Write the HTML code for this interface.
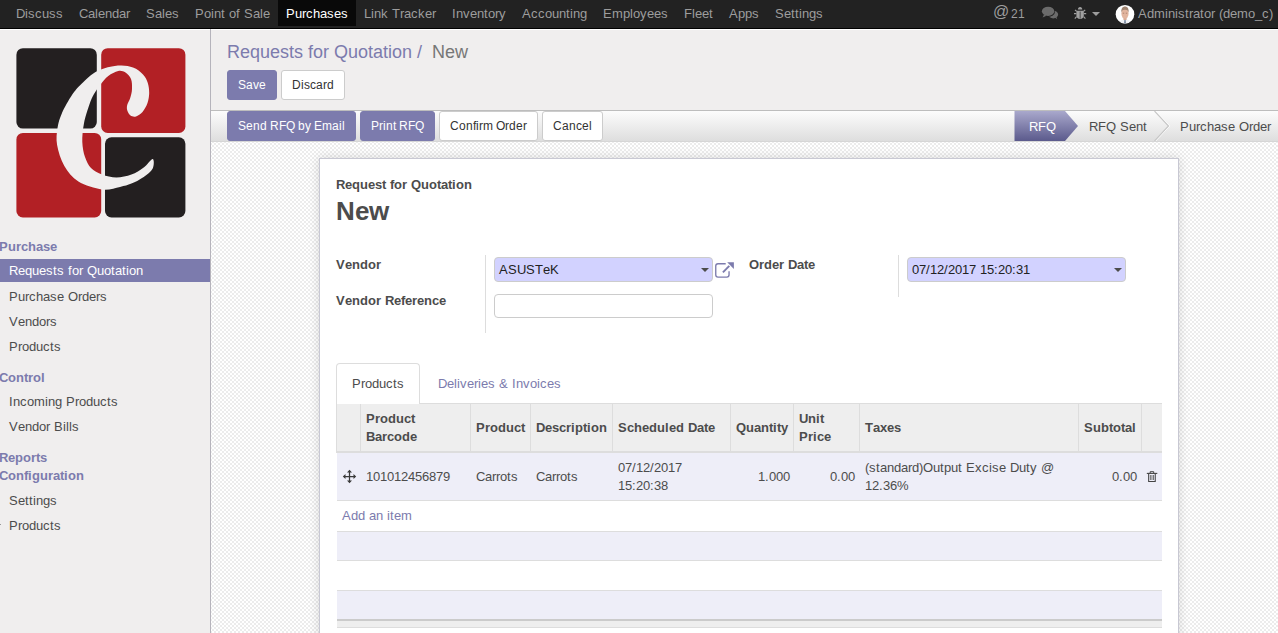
<!DOCTYPE html>
<html><head><meta charset="utf-8">
<style>
*{box-sizing:border-box}
html,body{margin:0;padding:0}
body{width:1278px;height:633px;overflow:hidden;position:relative;font-family:"Liberation Sans",sans-serif;font-size:13px;color:#4c4c4c;background:#f0eeee;font-kerning:none}
.a{position:absolute;white-space:nowrap;line-height:20px}
.bg{position:absolute}
.g i{display:inline-block;font-style:normal;white-space:pre;overflow:visible}
.btn{position:absolute;border:1px solid #ccc;border-radius:3px;background:#fff}
.btnp{background:#7c7bad;border-color:#7c7bad}
.inp{position:absolute;height:25px;border:1px solid #ccc;border-radius:4px;background:#fff}
.req{background:#d2d2ff}
.caret{position:absolute;width:0;height:0;border-left:4px solid transparent;border-right:4px solid transparent;border-top:4px solid #4c4c4c}
.vl{position:absolute;width:1px;background:#ddd}
.hl{position:absolute;height:1px;background:#ddd}
</style></head>
<body>
<!-- navbar -->
<div class="bg" style="left:0;top:0;width:1278px;height:28px;background:#222"></div>
<div class="bg" style="left:0;top:28px;width:1278px;height:1px;background:#000"></div>
<div class="bg" style="left:0;top:29px;width:1278px;height:1px;background:#fff"></div>
<div class="bg" style="left:278px;top:0;width:78px;height:26px;background:#090909"></div>
<div class="a" style="left:993px;top:0px;font-size:16px;line-height:24px;color:#9d9d9d">@</div>
<div class="bg" style="left:0;top:524px;width:1px;height:1px;background:#999"></div>
<svg class="bg" style="left:1041px;top:6px" width="18" height="14" viewBox="0 0 18 14">
 <ellipse cx="12.3" cy="8.6" rx="4.8" ry="3.9" fill="#6b6b6b"/>
 <path d="M13.8,11.5 L16.2,13.2 L15.2,10.6Z" fill="#6b6b6b"/>
 <ellipse cx="7.1" cy="5.4" rx="6.9" ry="5.3" fill="#222"/>
 <ellipse cx="7.1" cy="5.3" rx="6.2" ry="4.6" fill="#6b6b6b"/>
 <path d="M3,8.6 L1.6,11.4 L5.6,9.7Z" fill="#6b6b6b"/>
</svg>
<svg class="bg" style="left:1073px;top:6px" width="14" height="14" viewBox="0 0 14 14">
 <path d="M4.9,3.5 C4.9,2 5.8,1.1 7.1,1.1 C8.4,1.1 9.3,2 9.3,3.5Z" fill="#a0a0a0"/>
 <path d="M3.4,4.8 L10.8,4.8 L10.8,9.5 C10.8,11.6 9.3,12.9 7.1,12.9 C4.9,12.9 3.4,11.6 3.4,9.5Z" fill="#a0a0a0"/>
 <rect x="6.7" y="5.6" width="0.9" height="7" fill="#444"/>
 <path d="M3.6,5.4 L2,3.8 M3.4,7.6 L1,7.6 M3.6,10.6 L1.8,12.6 M10.6,5.4 L12.2,3.8 M10.8,7.6 L13.2,7.6 M10.6,10.6 L12.4,12.6" stroke="#a0a0a0" stroke-width="1.1"/>
</svg>
<div class="caret" style="left:1092px;top:12px;border-top-color:#9d9d9d"></div>
<svg class="bg" style="left:1115px;top:4px" width="20" height="20" viewBox="0 0 20 20">
 <defs><clipPath id="avc"><circle cx="10" cy="10.2" r="9.3"/></clipPath></defs>
 <circle cx="10" cy="10.2" r="9.3" fill="#fff"/>
 <g clip-path="url(#avc)">
 <path d="M3.5,21 C4,16.8 6.5,15.6 10,15.6 C13.5,15.6 16,16.8 16.5,21Z" fill="#eef0f4"/>
 <path d="M8.3,13.5 L11.7,13.5 L11.5,16 L8.5,16Z" fill="#d8aa94"/>
 <ellipse cx="10" cy="9.6" rx="3.6" ry="5" fill="#e2b59e"/>
 <path d="M6.3,8.6 C6,4.6 7.6,2.6 10,2.6 C12.4,2.6 14,4.6 13.7,8.6 C13.3,6.6 12.3,5.6 10,5.7 C7.7,5.6 6.7,6.6 6.3,8.6Z" fill="#a08470"/>
 <path d="M7.8,9.2 L9.2,9.2 M10.8,9.2 L12.2,9.2" stroke="#9a6e5c" stroke-width="0.7"/>
 <path d="M9.4,16 L10.6,16 L11,20 L9,20Z" fill="#6f7f96"/>
 </g>
</svg>

<!-- sidebar -->
<div class="bg" style="left:210px;top:29px;width:1px;height:604px;background:#b5b3bb"></div>
<svg class="bg" style="left:0;top:0" width="210" height="230" viewBox="0 0 210 230">
 <rect x="16.4" y="48.2" width="80.4" height="80.4" rx="6.5" fill="#231f20"/>
 <rect x="101.2" y="48.2" width="84.2" height="84.7" rx="6.5" fill="#b22025"/>
 <rect x="16.4" y="132.9" width="84.8" height="84.5" rx="6.5" fill="#b22025"/>
 <rect x="105" y="137.3" width="80.4" height="80.1" rx="6.5" fill="#231f20"/>
 <path d="M152.7,168.4 C151.2,171.4 147.2,174.4 143.7,176.9 C140.1,179.4 135.3,181.9 131.4,183.6 C127.5,185.3 124.9,185.9 120.0,186.9 C115.1,187.9 109.0,190.4 102.1,189.5 C95.2,188.6 84.7,185.5 78.4,181.6 C72.1,177.7 67.8,171.9 64.2,165.8 C60.7,159.7 58.2,151.3 57.1,145.0 C56.0,138.7 56.7,133.3 57.5,128.0 C58.3,122.7 59.6,118.5 62.0,113.0 C64.4,107.5 68.7,99.9 72.0,95.0 C75.3,90.1 77.4,87.7 81.6,83.7 C85.8,79.7 91.3,74.0 97.4,71.0 C103.5,68.0 112.1,66.2 118.0,65.6 C123.9,65.0 128.8,66.0 133.0,67.5 C137.2,69.0 140.5,71.9 143.0,74.5 C145.5,77.1 146.8,79.9 147.8,83.0 C148.8,86.1 149.2,89.7 149.2,93.0 C149.1,96.3 148.6,99.8 147.5,103.0 C146.4,106.2 144.4,109.8 142.5,112.0 C140.6,114.2 138.0,115.8 136.0,116.4 C134.0,117.0 131.9,116.5 130.5,115.5 C129.1,114.5 127.8,112.2 127.3,110.5 C126.8,108.8 126.7,107.1 127.2,105.0 C127.7,102.9 129.4,100.7 130.2,98.0 C131.0,95.3 131.9,92.2 132.0,89.0 C132.1,85.8 132.1,81.8 131.0,79.0 C129.9,76.2 127.6,73.8 125.5,72.5 C123.4,71.2 121.1,70.4 118.2,71.0 C115.3,71.6 111.2,73.8 108.3,76.0 C105.3,78.2 102.9,81.5 100.5,84.5 C98.1,87.5 95.8,90.7 94.0,94.0 C92.2,97.3 91.2,99.3 89.5,104.2 C87.8,109.1 85.2,116.9 84.0,123.2 C82.8,129.5 82.1,136.4 82.3,142.0 C82.5,147.6 83.5,152.7 85.0,157.0 C86.5,161.3 88.2,165.1 91.0,168.0 C93.8,170.9 97.9,172.9 102.1,174.5 C106.3,176.1 111.5,177.5 116.4,177.5 C121.3,177.5 126.9,176.3 131.4,174.6 C135.9,172.9 140.1,170.1 143.7,167.5 C147.2,164.9 151.2,158.8 152.7,158.9 C154.2,159.1 154.2,165.4 152.7,168.4Z" fill="#f0eeee"/>
</svg>
<div class="bg" style="left:0;top:259px;width:210px;height:23px;background:#7c7bad"></div>

<!-- statusbar -->
<div class="bg" style="left:211px;top:110px;width:1067px;height:1px;background:#bdbdbd"></div>
<div class="bg" style="left:211px;top:111px;width:1067px;height:30px;background:linear-gradient(#fcfcfc,#dedede)"></div>
<div class="bg" style="left:211px;top:141px;width:1067px;height:1px;background:#d6d6d6"></div>
<svg class="bg" style="left:1000px;top:111px" width="278" height="30" viewBox="0 0 278 30">
 <defs><linearGradient id="pg" x1="0" y1="0" x2="0" y2="1"><stop offset="0" stop-color="#a9a8cc"/><stop offset="1" stop-color="#5b5a8c"/></linearGradient></defs>
 <path d="M14.5,0 L65,0 L78,15 L65,30 L14.5,30Z" fill="url(#pg)"/>
 <path d="M155.7,0 L169.7,15 L155.7,30" fill="none" stroke="#ffffff" stroke-width="1"/>
 <path d="M154.5,0 L168.5,15 L154.5,30" fill="none" stroke="#c6c6c6" stroke-width="1.1"/>
</svg>

<div class="btn btnp" style="left:227px;top:70px;width:50px;height:30px"></div>
<div class="btn" style="left:281px;top:70px;width:64px;height:30px"></div>
<div class="btn btnp" style="left:227px;top:111px;width:129px;height:30px"></div>
<div class="btn btnp" style="left:360.0px;top:111px;width:75px;height:30px"></div>
<div class="btn" style="left:439.0px;top:111px;width:99px;height:30px"></div>
<div class="btn" style="left:542.0px;top:111px;width:61px;height:30px"></div>

<!-- form bg -->
<svg class="bg" style="left:211px;top:142px" width="1067" height="491">
 <defs><pattern id="chk" x="3" y="1" width="4" height="4" patternUnits="userSpaceOnUse"><rect width="4" height="4" fill="#fff"/><rect x="0" y="0" width="2" height="2" fill="#ececec"/><rect x="2" y="2" width="2" height="2" fill="#ececec"/></pattern></defs>
 <rect width="1067" height="491" fill="url(#chk)"/>
</svg>
<div class="bg" style="left:319px;top:158px;width:860px;height:520px;background:#fff;border:1px solid #c8c8d3;box-shadow:0 0 10px rgba(0,0,0,.15)"></div>

<!-- fields -->
<div class="bg" style="left:485px;top:255px;width:1px;height:78px;background:#ddd"></div>
<div class="bg" style="left:898px;top:255px;width:1px;height:42px;background:#ddd"></div>
<div class="inp req" style="left:494px;top:257px;width:219px"></div>
<div class="caret" style="left:701px;top:268px"></div>
<svg class="bg" style="left:714px;top:261px" width="22" height="18" viewBox="0 0 22 18">
 <path d="M11.7,2.75 L4,2.75 C2.6,2.75 1.75,3.6 1.75,5 L1.75,13.8 C1.75,15.2 2.6,16.05 4,16.05 L12.8,16.05 C14.2,16.05 15.05,15.2 15.05,13.8 L15.05,10.3" fill="none" stroke="#7c7bad" stroke-width="1.35"/>
 <path d="M8.9,11.3 L15.3,4.9" stroke="#7c7bad" stroke-width="1.9"/>
 <path d="M13.2,1.2 L19.9,1.2 L19.9,7.9Z" fill="#7c7bad"/>
</svg>
<div class="inp" style="left:494px;top:294px;width:219px;height:24px"></div>
<div class="inp req" style="left:907px;top:257px;width:219px"></div>
<div class="caret" style="left:1114px;top:268px"></div>

<!-- tabs -->
<div class="bg" style="left:336px;top:403px;width:826px;height:1px;background:#ddd"></div>
<div class="bg" style="left:336px;top:363px;width:84px;height:41px;background:#fff;border:1px solid #ddd;border-bottom:none;border-radius:4px 4px 0 0"></div>

<!-- table -->
<div class="bg" style="left:336px;top:404px;width:826px;height:47px;background:#eee"></div>
<div class="bg" style="left:336px;top:404px;width:1px;height:47px;background:#ddd"></div>
<div class="bg" style="left:336px;top:451px;width:826px;height:2px;background:#ddd"></div>
<div class="vl" style="left:360px;top:404px;height:47px"></div>
<div class="vl" style="left:470px;top:404px;height:47px"></div>
<div class="vl" style="left:530px;top:404px;height:47px"></div>
<div class="vl" style="left:612px;top:404px;height:47px"></div>
<div class="vl" style="left:730px;top:404px;height:47px"></div>
<div class="vl" style="left:793px;top:404px;height:47px"></div>
<div class="vl" style="left:859px;top:404px;height:47px"></div>
<div class="vl" style="left:1078px;top:404px;height:47px"></div>
<div class="vl" style="left:1141px;top:404px;height:47px"></div>
<div class="bg" style="left:337px;top:453px;width:825px;height:47px;background:#eeeef8"></div>
<div class="hl" style="left:337px;top:500px;width:825px"></div>
<div class="hl" style="left:337px;top:531px;width:825px"></div>
<div class="bg" style="left:337px;top:532px;width:825px;height:28px;background:#eeeef8"></div>
<div class="hl" style="left:337px;top:560px;width:825px"></div>
<div class="hl" style="left:337px;top:590px;width:825px"></div>
<div class="bg" style="left:337px;top:591px;width:825px;height:28px;background:#eeeef8"></div>
<div class="bg" style="left:337px;top:619px;width:825px;height:2px;background:#cbcbcb"></div>
<div class="bg" style="left:337px;top:621px;width:825px;height:6px;background:#eee"></div>
<div class="hl" style="left:337px;top:627px;width:825px"></div>
<!-- move icon -->
<svg class="bg" style="left:342px;top:469px" width="15" height="15" viewBox="0 0 15 15">
 <path d="M2,7.5 L13,7.5 M7.5,2 L7.5,13" stroke="#3a3a3a" stroke-width="1.25"/>
 <path d="M7.5,0.8 L10,3.5 L5,3.5Z M7.5,14.2 L10,11.5 L5,11.5Z M0.8,7.5 L3.5,5 L3.5,10Z M14.2,7.5 L11.5,5 L11.5,10Z" fill="#3a3a3a"/>
</svg>
<!-- trash icon -->
<svg class="bg" style="left:1146px;top:470px" width="12" height="13" viewBox="0 0 12 13">
 <path d="M0.8,3.4 L11.3,3.4" stroke="#444" stroke-width="1.1"/>
 <path d="M4.2,3.2 L4.2,1.7 L7.7,1.7 L7.7,3.2" fill="none" stroke="#444" stroke-width="1"/>
 <path d="M2.65,3.4 L2.65,11.45 L9.25,11.45 L9.25,3.4" fill="none" stroke="#444" stroke-width="1.05"/>
 <path d="M4.4,5 L4.4,10 M5.95,5 L5.95,10 M7.5,5 L7.5,10" stroke="#555" stroke-width="0.8"/>
</svg>

<div class="a g" style="top:4px;font-size:13px;left:16px;color:#9d9d9d;"><i style="width:9px">D</i><i style="width:3px">i</i><i style="width:7px">s</i><i style="width:7px">c</i><i style="width:7px">u</i><i style="width:7px">s</i><i style="width:7px">s</i></div>
<div class="a g" style="top:4px;font-size:13px;left:79px;color:#9d9d9d;"><i style="width:9px">C</i><i style="width:7px">a</i><i style="width:3px">l</i><i style="width:7px">e</i><i style="width:7px">n</i><i style="width:7px">d</i><i style="width:7px">a</i><i style="width:4px">r</i></div>
<div class="a g" style="top:4px;font-size:13px;left:146px;color:#9d9d9d;"><i style="width:9px">S</i><i style="width:7px">a</i><i style="width:3px">l</i><i style="width:7px">e</i><i style="width:7px">s</i></div>
<div class="a g" style="top:4px;font-size:13px;left:195px;color:#9d9d9d;"><i style="width:9px">P</i><i style="width:7px">o</i><i style="width:3px">i</i><i style="width:7px">n</i><i style="width:4px">t</i><i style="width:4px"> </i><i style="width:7px">o</i><i style="width:4px">f</i><i style="width:4px"> </i><i style="width:9px">S</i><i style="width:7px">a</i><i style="width:3px">l</i><i style="width:7px">e</i></div>
<div class="a g" style="top:4px;font-size:13px;left:286px;color:#fff;"><i style="width:9px">P</i><i style="width:7px">u</i><i style="width:4px">r</i><i style="width:7px">c</i><i style="width:7px">h</i><i style="width:7px">a</i><i style="width:7px">s</i><i style="width:7px">e</i><i style="width:7px">s</i></div>
<div class="a g" style="top:4px;font-size:13px;left:364px;color:#9d9d9d;"><i style="width:7px">L</i><i style="width:3px">i</i><i style="width:7px">n</i><i style="width:7px">k</i><i style="width:4px"> </i><i style="width:8px">T</i><i style="width:4px">r</i><i style="width:7px">a</i><i style="width:7px">c</i><i style="width:7px">k</i><i style="width:7px">e</i><i style="width:4px">r</i></div>
<div class="a g" style="top:4px;font-size:13px;left:452px;color:#9d9d9d;"><i style="width:4px">I</i><i style="width:7px">n</i><i style="width:7px">v</i><i style="width:7px">e</i><i style="width:7px">n</i><i style="width:4px">t</i><i style="width:7px">o</i><i style="width:4px">r</i><i style="width:7px">y</i></div>
<div class="a g" style="top:4px;font-size:13px;left:522px;color:#9d9d9d;"><i style="width:9px">A</i><i style="width:7px">c</i><i style="width:7px">c</i><i style="width:7px">o</i><i style="width:7px">u</i><i style="width:7px">n</i><i style="width:4px">t</i><i style="width:3px">i</i><i style="width:7px">n</i><i style="width:7px">g</i></div>
<div class="a g" style="top:4px;font-size:13px;left:603px;color:#9d9d9d;"><i style="width:9px">E</i><i style="width:11px">m</i><i style="width:7px">p</i><i style="width:3px">l</i><i style="width:7px">o</i><i style="width:7px">y</i><i style="width:7px">e</i><i style="width:7px">e</i><i style="width:7px">s</i></div>
<div class="a g" style="top:4px;font-size:13px;left:684px;color:#9d9d9d;"><i style="width:8px">F</i><i style="width:3px">l</i><i style="width:7px">e</i><i style="width:7px">e</i><i style="width:4px">t</i></div>
<div class="a g" style="top:4px;font-size:13px;left:729px;color:#9d9d9d;"><i style="width:9px">A</i><i style="width:7px">p</i><i style="width:7px">p</i><i style="width:7px">s</i></div>
<div class="a g" style="top:4px;font-size:13px;left:775px;color:#9d9d9d;"><i style="width:9px">S</i><i style="width:7px">e</i><i style="width:4px">t</i><i style="width:4px">t</i><i style="width:3px">i</i><i style="width:7px">n</i><i style="width:7px">g</i><i style="width:7px">s</i></div>
<div class="a g" style="top:4px;font-size:12px;left:1011px;color:#9d9d9d;"><i style="width:7px">2</i><i style="width:7px">1</i></div>
<div class="a g" style="top:4px;font-size:13px;left:1138px;color:#9d9d9d;"><i style="width:9px">A</i><i style="width:7px">d</i><i style="width:11px">m</i><i style="width:3px">i</i><i style="width:7px">n</i><i style="width:3px">i</i><i style="width:7px">s</i><i style="width:4px">t</i><i style="width:4px">r</i><i style="width:7px">a</i><i style="width:4px">t</i><i style="width:7px">o</i><i style="width:4px">r</i><i style="width:4px"> </i><i style="width:4px">(</i><i style="width:7px">d</i><i style="width:7px">e</i><i style="width:11px">m</i><i style="width:7px">o</i><i style="width:7px">_</i><i style="width:7px">c</i><i style="width:4px">)</i></div>
<div class="a g" style="top:237px;font-size:13px;left:-1px;font-weight:bold;color:#7c7bad;"><i style="width:9px">P</i><i style="width:8px">u</i><i style="width:5px">r</i><i style="width:7px">c</i><i style="width:8px">h</i><i style="width:7px">a</i><i style="width:7px">s</i><i style="width:7px">e</i></div>
<div class="a g" style="top:261px;font-size:13px;left:9px;color:#fff;"><i style="width:9px">R</i><i style="width:7px">e</i><i style="width:7px">q</i><i style="width:7px">u</i><i style="width:7px">e</i><i style="width:7px">s</i><i style="width:4px">t</i><i style="width:7px">s</i><i style="width:4px"> </i><i style="width:4px">f</i><i style="width:7px">o</i><i style="width:4px">r</i><i style="width:4px"> </i><i style="width:10px">Q</i><i style="width:7px">u</i><i style="width:7px">o</i><i style="width:4px">t</i><i style="width:7px">a</i><i style="width:4px">t</i><i style="width:3px">i</i><i style="width:7px">o</i><i style="width:7px">n</i></div>
<div class="a g" style="top:287px;font-size:13px;left:9px;"><i style="width:9px">P</i><i style="width:7px">u</i><i style="width:4px">r</i><i style="width:7px">c</i><i style="width:7px">h</i><i style="width:7px">a</i><i style="width:7px">s</i><i style="width:7px">e</i><i style="width:4px"> </i><i style="width:10px">O</i><i style="width:4px">r</i><i style="width:7px">d</i><i style="width:7px">e</i><i style="width:4px">r</i><i style="width:7px">s</i></div>
<div class="a g" style="top:312px;font-size:13px;left:9px;"><i style="width:9px">V</i><i style="width:7px">e</i><i style="width:7px">n</i><i style="width:7px">d</i><i style="width:7px">o</i><i style="width:4px">r</i><i style="width:7px">s</i></div>
<div class="a g" style="top:337px;font-size:13px;left:9px;"><i style="width:9px">P</i><i style="width:4px">r</i><i style="width:7px">o</i><i style="width:7px">d</i><i style="width:7px">u</i><i style="width:7px">c</i><i style="width:4px">t</i><i style="width:7px">s</i></div>
<div class="a g" style="top:368px;font-size:13px;left:-1px;font-weight:bold;color:#7c7bad;"><i style="width:9px">C</i><i style="width:8px">o</i><i style="width:8px">n</i><i style="width:4px">t</i><i style="width:5px">r</i><i style="width:8px">o</i><i style="width:4px">l</i></div>
<div class="a g" style="top:392px;font-size:13px;left:9px;"><i style="width:4px">I</i><i style="width:7px">n</i><i style="width:7px">c</i><i style="width:7px">o</i><i style="width:11px">m</i><i style="width:3px">i</i><i style="width:7px">n</i><i style="width:7px">g</i><i style="width:4px"> </i><i style="width:9px">P</i><i style="width:4px">r</i><i style="width:7px">o</i><i style="width:7px">d</i><i style="width:7px">u</i><i style="width:7px">c</i><i style="width:4px">t</i><i style="width:7px">s</i></div>
<div class="a g" style="top:417px;font-size:13px;left:9px;"><i style="width:9px">V</i><i style="width:7px">e</i><i style="width:7px">n</i><i style="width:7px">d</i><i style="width:7px">o</i><i style="width:4px">r</i><i style="width:4px"> </i><i style="width:9px">B</i><i style="width:3px">i</i><i style="width:3px">l</i><i style="width:3px">l</i><i style="width:7px">s</i></div>
<div class="a g" style="top:448px;font-size:13px;left:-1px;font-weight:bold;color:#7c7bad;"><i style="width:9px">R</i><i style="width:7px">e</i><i style="width:8px">p</i><i style="width:8px">o</i><i style="width:5px">r</i><i style="width:4px">t</i><i style="width:7px">s</i></div>
<div class="a g" style="top:466px;font-size:13px;left:-1px;font-weight:bold;color:#7c7bad;"><i style="width:9px">C</i><i style="width:8px">o</i><i style="width:8px">n</i><i style="width:4px">f</i><i style="width:4px">i</i><i style="width:8px">g</i><i style="width:8px">u</i><i style="width:5px">r</i><i style="width:7px">a</i><i style="width:4px">t</i><i style="width:4px">i</i><i style="width:8px">o</i><i style="width:8px">n</i></div>
<div class="a g" style="top:491px;font-size:13px;left:9px;"><i style="width:9px">S</i><i style="width:7px">e</i><i style="width:4px">t</i><i style="width:4px">t</i><i style="width:3px">i</i><i style="width:7px">n</i><i style="width:7px">g</i><i style="width:7px">s</i></div>
<div class="a g" style="top:516px;font-size:13px;left:9px;"><i style="width:9px">P</i><i style="width:4px">r</i><i style="width:7px">o</i><i style="width:7px">d</i><i style="width:7px">u</i><i style="width:7px">c</i><i style="width:4px">t</i><i style="width:7px">s</i></div>
<div class="a g" style="top:42px;font-size:18px;left:227px;color:#7c7bad;"><i style="width:13px">R</i><i style="width:10px">e</i><i style="width:10px">q</i><i style="width:10px">u</i><i style="width:10px">e</i><i style="width:9px">s</i><i style="width:5px">t</i><i style="width:9px">s</i><i style="width:5px"> </i><i style="width:5px">f</i><i style="width:10px">o</i><i style="width:6px">r</i><i style="width:5px"> </i><i style="width:14px">Q</i><i style="width:10px">u</i><i style="width:10px">o</i><i style="width:5px">t</i><i style="width:10px">a</i><i style="width:5px">t</i><i style="width:4px">i</i><i style="width:10px">o</i><i style="width:10px">n</i><i style="width:5px"> </i><i style="width:5px">/</i></div>
<div class="a g" style="top:42px;font-size:18px;left:432px;color:#777;"><i style="width:13px">N</i><i style="width:10px">e</i><i style="width:13px">w</i></div>
<div class="a g" style="top:175px;font-size:13px;left:336px;font-weight:bold;"><i style="width:9px">R</i><i style="width:7px">e</i><i style="width:8px">q</i><i style="width:8px">u</i><i style="width:7px">e</i><i style="width:7px">s</i><i style="width:4px">t</i><i style="width:4px"> </i><i style="width:4px">f</i><i style="width:8px">o</i><i style="width:5px">r</i><i style="width:4px"> </i><i style="width:10px">Q</i><i style="width:8px">u</i><i style="width:8px">o</i><i style="width:4px">t</i><i style="width:7px">a</i><i style="width:4px">t</i><i style="width:4px">i</i><i style="width:8px">o</i><i style="width:8px">n</i></div>
<div class="a g" style="top:201px;font-size:26px;left:336px;font-weight:bold;"><i style="width:19px">N</i><i style="width:14px">e</i><i style="width:20px">w</i></div>
<div class="a g" style="top:255px;font-size:13px;left:336px;font-weight:bold;"><i style="width:9px">V</i><i style="width:7px">e</i><i style="width:8px">n</i><i style="width:8px">d</i><i style="width:8px">o</i><i style="width:5px">r</i></div>
<div class="a g" style="top:291px;font-size:13px;left:336px;font-weight:bold;"><i style="width:9px">V</i><i style="width:7px">e</i><i style="width:8px">n</i><i style="width:8px">d</i><i style="width:8px">o</i><i style="width:5px">r</i><i style="width:4px"> </i><i style="width:9px">R</i><i style="width:7px">e</i><i style="width:4px">f</i><i style="width:7px">e</i><i style="width:5px">r</i><i style="width:7px">e</i><i style="width:8px">n</i><i style="width:7px">c</i><i style="width:7px">e</i></div>
<div class="a g" style="top:255px;font-size:13px;left:749px;font-weight:bold;"><i style="width:10px">O</i><i style="width:5px">r</i><i style="width:8px">d</i><i style="width:7px">e</i><i style="width:5px">r</i><i style="width:4px"> </i><i style="width:9px">D</i><i style="width:7px">a</i><i style="width:4px">t</i><i style="width:7px">e</i></div>
<div class="a g" style="top:260px;font-size:13px;left:499px;color:#222;"><i style="width:9px">A</i><i style="width:9px">S</i><i style="width:9px">U</i><i style="width:9px">S</i><i style="width:8px">T</i><i style="width:7px">e</i><i style="width:9px">K</i></div>
<div class="a g" style="top:260px;font-size:13px;left:912px;color:#222;"><i style="width:7px">0</i><i style="width:7px">7</i><i style="width:4px">/</i><i style="width:7px">1</i><i style="width:7px">2</i><i style="width:4px">/</i><i style="width:7px">2</i><i style="width:7px">0</i><i style="width:7px">1</i><i style="width:7px">7</i><i style="width:4px"> </i><i style="width:7px">1</i><i style="width:7px">5</i><i style="width:4px">:</i><i style="width:7px">2</i><i style="width:7px">0</i><i style="width:4px">:</i><i style="width:7px">3</i><i style="width:7px">1</i></div>
<div class="a g" style="top:374px;font-size:13px;left:352px;"><i style="width:9px">P</i><i style="width:4px">r</i><i style="width:7px">o</i><i style="width:7px">d</i><i style="width:7px">u</i><i style="width:7px">c</i><i style="width:4px">t</i><i style="width:7px">s</i></div>
<div class="a g" style="top:374px;font-size:13px;left:438px;color:#7c7bad;"><i style="width:9px">D</i><i style="width:7px">e</i><i style="width:3px">l</i><i style="width:3px">i</i><i style="width:7px">v</i><i style="width:7px">e</i><i style="width:4px">r</i><i style="width:3px">i</i><i style="width:7px">e</i><i style="width:7px">s</i><i style="width:4px"> </i><i style="width:9px">&amp;</i><i style="width:4px"> </i><i style="width:4px">I</i><i style="width:7px">n</i><i style="width:7px">v</i><i style="width:7px">o</i><i style="width:3px">i</i><i style="width:7px">c</i><i style="width:7px">e</i><i style="width:7px">s</i></div>
<div class="a g" style="top:409px;font-size:13px;left:366px;font-weight:bold;"><i style="width:9px">P</i><i style="width:5px">r</i><i style="width:8px">o</i><i style="width:8px">d</i><i style="width:8px">u</i><i style="width:7px">c</i><i style="width:4px">t</i></div>
<div class="a g" style="top:427px;font-size:13px;left:366px;font-weight:bold;"><i style="width:9px">B</i><i style="width:7px">a</i><i style="width:5px">r</i><i style="width:7px">c</i><i style="width:8px">o</i><i style="width:8px">d</i><i style="width:7px">e</i></div>
<div class="a g" style="top:418px;font-size:13px;left:476px;font-weight:bold;"><i style="width:9px">P</i><i style="width:5px">r</i><i style="width:8px">o</i><i style="width:8px">d</i><i style="width:8px">u</i><i style="width:7px">c</i><i style="width:4px">t</i></div>
<div class="a g" style="top:418px;font-size:13px;left:536px;font-weight:bold;"><i style="width:9px">D</i><i style="width:7px">e</i><i style="width:7px">s</i><i style="width:7px">c</i><i style="width:5px">r</i><i style="width:4px">i</i><i style="width:8px">p</i><i style="width:4px">t</i><i style="width:4px">i</i><i style="width:8px">o</i><i style="width:8px">n</i></div>
<div class="a g" style="top:418px;font-size:13px;left:618px;font-weight:bold;"><i style="width:9px">S</i><i style="width:7px">c</i><i style="width:8px">h</i><i style="width:7px">e</i><i style="width:8px">d</i><i style="width:8px">u</i><i style="width:4px">l</i><i style="width:7px">e</i><i style="width:8px">d</i><i style="width:4px"> </i><i style="width:9px">D</i><i style="width:7px">a</i><i style="width:4px">t</i><i style="width:7px">e</i></div>
<div class="a g" style="top:418px;font-size:13px;left:736px;font-weight:bold;"><i style="width:10px">Q</i><i style="width:8px">u</i><i style="width:7px">a</i><i style="width:8px">n</i><i style="width:4px">t</i><i style="width:4px">i</i><i style="width:4px">t</i><i style="width:7px">y</i></div>
<div class="a g" style="top:409px;font-size:13px;left:799px;font-weight:bold;"><i style="width:9px">U</i><i style="width:8px">n</i><i style="width:4px">i</i><i style="width:4px">t</i></div>
<div class="a g" style="top:427px;font-size:13px;left:799px;font-weight:bold;"><i style="width:9px">P</i><i style="width:5px">r</i><i style="width:4px">i</i><i style="width:7px">c</i><i style="width:7px">e</i></div>
<div class="a g" style="top:418px;font-size:13px;left:865px;font-weight:bold;"><i style="width:8px">T</i><i style="width:7px">a</i><i style="width:7px">x</i><i style="width:7px">e</i><i style="width:7px">s</i></div>
<div class="a g" style="top:418px;font-size:13px;left:1084px;font-weight:bold;"><i style="width:9px">S</i><i style="width:8px">u</i><i style="width:8px">b</i><i style="width:4px">t</i><i style="width:8px">o</i><i style="width:4px">t</i><i style="width:7px">a</i><i style="width:4px">l</i></div>
<div class="a g" style="top:467px;font-size:13px;left:366px;"><i style="width:7px">1</i><i style="width:7px">0</i><i style="width:7px">1</i><i style="width:7px">0</i><i style="width:7px">1</i><i style="width:7px">2</i><i style="width:7px">4</i><i style="width:7px">5</i><i style="width:7px">6</i><i style="width:7px">8</i><i style="width:7px">7</i><i style="width:7px">9</i></div>
<div class="a g" style="top:467px;font-size:13px;left:476px;"><i style="width:9px">C</i><i style="width:7px">a</i><i style="width:4px">r</i><i style="width:4px">r</i><i style="width:7px">o</i><i style="width:4px">t</i><i style="width:7px">s</i></div>
<div class="a g" style="top:467px;font-size:13px;left:536px;"><i style="width:9px">C</i><i style="width:7px">a</i><i style="width:4px">r</i><i style="width:4px">r</i><i style="width:7px">o</i><i style="width:4px">t</i><i style="width:7px">s</i></div>
<div class="a g" style="top:458px;font-size:13px;left:618px;"><i style="width:7px">0</i><i style="width:7px">7</i><i style="width:4px">/</i><i style="width:7px">1</i><i style="width:7px">2</i><i style="width:4px">/</i><i style="width:7px">2</i><i style="width:7px">0</i><i style="width:7px">1</i><i style="width:7px">7</i></div>
<div class="a g" style="top:476px;font-size:13px;left:618px;"><i style="width:7px">1</i><i style="width:7px">5</i><i style="width:4px">:</i><i style="width:7px">2</i><i style="width:7px">0</i><i style="width:4px">:</i><i style="width:7px">3</i><i style="width:7px">8</i></div>
<div class="a g" style="top:467px;font-size:13px;left:758px;"><i style="width:7px">1</i><i style="width:4px">.</i><i style="width:7px">0</i><i style="width:7px">0</i><i style="width:7px">0</i></div>
<div class="a g" style="top:467px;font-size:13px;left:830px;"><i style="width:7px">0</i><i style="width:4px">.</i><i style="width:7px">0</i><i style="width:7px">0</i></div>
<div class="a g" style="top:458px;font-size:13px;left:865px;"><i style="width:4px">(</i><i style="width:7px">s</i><i style="width:4px">t</i><i style="width:7px">a</i><i style="width:7px">n</i><i style="width:7px">d</i><i style="width:7px">a</i><i style="width:4px">r</i><i style="width:7px">d</i><i style="width:4px">)</i><i style="width:10px">O</i><i style="width:7px">u</i><i style="width:4px">t</i><i style="width:7px">p</i><i style="width:7px">u</i><i style="width:4px">t</i><i style="width:4px"> </i><i style="width:9px">E</i><i style="width:7px">x</i><i style="width:7px">c</i><i style="width:3px">i</i><i style="width:7px">s</i><i style="width:7px">e</i><i style="width:4px"> </i><i style="width:9px">D</i><i style="width:7px">u</i><i style="width:4px">t</i><i style="width:7px">y</i><i style="width:4px"> </i><i style="width:13px">@</i></div>
<div class="a g" style="top:476px;font-size:13px;left:865px;"><i style="width:7px">1</i><i style="width:7px">2</i><i style="width:4px">.</i><i style="width:7px">3</i><i style="width:7px">6</i><i style="width:12px">%</i></div>
<div class="a g" style="top:467px;font-size:13px;left:1112px;"><i style="width:7px">0</i><i style="width:4px">.</i><i style="width:7px">0</i><i style="width:7px">0</i></div>
<div class="a g" style="top:506px;font-size:13px;left:342px;color:#7c7bad;"><i style="width:9px">A</i><i style="width:7px">d</i><i style="width:7px">d</i><i style="width:4px"> </i><i style="width:7px">a</i><i style="width:7px">n</i><i style="width:4px"> </i><i style="width:3px">i</i><i style="width:4px">t</i><i style="width:7px">e</i><i style="width:11px">m</i></div>
<div class="a g" style="top:117px;font-size:13px;left:1029px;color:#fff;"><i style="width:9px">R</i><i style="width:8px">F</i><i style="width:10px">Q</i></div>
<div class="a g" style="top:117px;font-size:13px;left:1089px;"><i style="width:9px">R</i><i style="width:8px">F</i><i style="width:10px">Q</i><i style="width:4px"> </i><i style="width:9px">S</i><i style="width:7px">e</i><i style="width:7px">n</i><i style="width:4px">t</i></div>
<div class="a g" style="top:117px;font-size:13px;left:1180px;"><i style="width:9px">P</i><i style="width:7px">u</i><i style="width:4px">r</i><i style="width:7px">c</i><i style="width:7px">h</i><i style="width:7px">a</i><i style="width:7px">s</i><i style="width:7px">e</i><i style="width:4px"> </i><i style="width:10px">O</i><i style="width:4px">r</i><i style="width:7px">d</i><i style="width:7px">e</i><i style="width:4px">r</i></div>
<div class="a g" style="top:75px;font-size:12px;left:238px;color:#fff;"><i style="width:8px">S</i><i style="width:7px">a</i><i style="width:6px">v</i><i style="width:7px">e</i></div>
<div class="a g" style="top:75px;font-size:12px;left:292px;color:#333;"><i style="width:9px">D</i><i style="width:3px">i</i><i style="width:6px">s</i><i style="width:6px">c</i><i style="width:7px">a</i><i style="width:4px">r</i><i style="width:7px">d</i></div>
<div class="a g" style="top:116px;font-size:12px;left:238px;color:#fff;"><i style="width:8px">S</i><i style="width:7px">e</i><i style="width:7px">n</i><i style="width:7px">d</i><i style="width:3px"> </i><i style="width:9px">R</i><i style="width:7px">F</i><i style="width:9px">Q</i><i style="width:3px"> </i><i style="width:7px">b</i><i style="width:6px">y</i><i style="width:3px"> </i><i style="width:8px">E</i><i style="width:10px">m</i><i style="width:7px">a</i><i style="width:3px">i</i><i style="width:3px">l</i></div>
<div class="a g" style="top:116px;font-size:12px;left:371px;color:#fff;"><i style="width:8px">P</i><i style="width:4px">r</i><i style="width:3px">i</i><i style="width:7px">n</i><i style="width:3px">t</i><i style="width:3px"> </i><i style="width:9px">R</i><i style="width:7px">F</i><i style="width:9px">Q</i></div>
<div class="a g" style="top:116px;font-size:12px;left:450px;color:#333;"><i style="width:9px">C</i><i style="width:7px">o</i><i style="width:7px">n</i><i style="width:3px">f</i><i style="width:3px">i</i><i style="width:4px">r</i><i style="width:10px">m</i><i style="width:3px"> </i><i style="width:9px">O</i><i style="width:4px">r</i><i style="width:7px">d</i><i style="width:7px">e</i><i style="width:4px">r</i></div>
<div class="a g" style="top:116px;font-size:12px;left:553px;color:#333;"><i style="width:9px">C</i><i style="width:7px">a</i><i style="width:7px">n</i><i style="width:6px">c</i><i style="width:7px">e</i><i style="width:3px">l</i></div>
</body></html>
